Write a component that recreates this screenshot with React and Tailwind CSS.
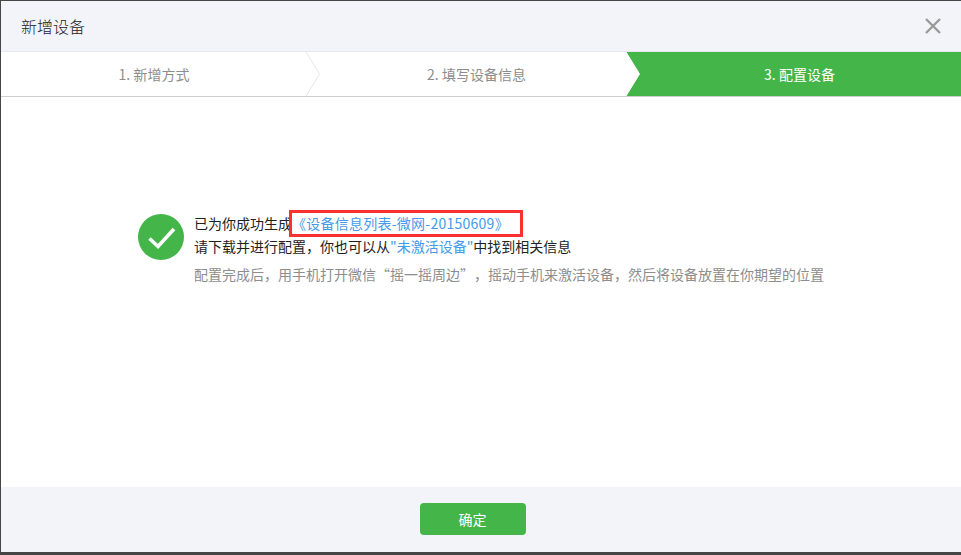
const font = { fontFamily: '"Noto Sans CJK SC", "Noto Sans", sans-serif' };

const Chevron = ({ className, fill = "none", stroke = "#e7e7e7" }) => (
  <svg className={className} width="14" height="44" viewBox="0 0 14 44">
    <path d="M0 0 L13.5 22 L0 44" fill={fill} stroke={stroke} strokeWidth="1" />
  </svg>
);

export default function App() {
  return (
    <div
      className="w-[961px] h-[555px] bg-[#454545] pt-px pl-px pb-[3px] overflow-hidden"
      style={font}
    >
      <div className="h-full flex flex-col bg-white">
        {/* Title bar */}
        <div className="h-[51px] shrink-0 flex items-center justify-between bg-[#f3f4f9] border-b border-[#e7e7eb] pl-5 pr-[20px]">
          <span className="text-[16px] text-[#222] font-light">新增设备</span>
          <svg width="16" height="16" viewBox="0 0 16 16">
            <path d="M1 1 L15 15 M15 1 L1 15" stroke="#9a9a9a" strokeWidth="2.4" />
          </svg>
        </div>

        {/* Steps */}
        <div className="h-[45px] shrink-0 flex border-b border-[#cfcfcf] text-[14px]">
          <div className="w-[305px] flex items-center justify-center text-[#8d8d8d] pl-[1px]">
            1. 新增方式
          </div>
          <div className="w-[14px] shrink-0">
            <Chevron />
          </div>
          <div className="w-[306px] flex items-center justify-center text-[#8d8d8d] pl-[7px]">
            2. 填写设备信息
          </div>
          <div className="flex-1 relative flex items-center justify-center bg-[#44b549] text-white pl-[12px]">
            <Chevron className="absolute left-0 top-0" fill="#ffffff" stroke="#ffffff" />
            3. 配置设备
          </div>
        </div>

        {/* Message */}
        <div className="flex-1 flex items-start pl-[137px] pt-[115px]">
          <svg width="46" height="46" viewBox="0 0 46 46" className="shrink-0 mt-[2px]">
            <circle cx="23" cy="23" r="23" fill="#44b549" />
            <path d="M11.5 24.5 L20 32.5 L36 15" fill="none" stroke="#ffffff" strokeWidth="3.6" />
          </svg>
          <div className="ml-[10px] text-[14px] leading-[23px] text-[#222]">
            <p className="relative">
              已为你成功生成<span className="text-[#459ae9] tracking-[0.25px]">《设备信息列表-微网-20150609》</span>
              <span className="absolute left-[95px] top-[-2px] w-[234px] h-[27px] border-[3px] border-[#fb3030]" />
            </p>
            <p>
              请下载并进行配置，你也可以从<span className="text-[#459ae9]">"未激活设备"</span>中找到相关信息
            </p>
            <p className="mt-[5px] text-[#8d8d8d] whitespace-nowrap [text-spacing-trim:space-all]">
              配置完成后，用手机打开微信“摇一摇周边”，摇动手机来激活设备，然后将设备放置在你期望的位置
            </p>
          </div>
        </div>

        {/* Footer */}
        <div className="h-[65px] shrink-0 flex justify-center bg-[#f3f4f9] pt-[16px]">
          <button className="w-[106px] h-[32px] mr-[17px] rounded-[4px] bg-[#44b549] text-white text-[14px]">
            确定
          </button>
        </div>
      </div>
    </div>
  );
}
